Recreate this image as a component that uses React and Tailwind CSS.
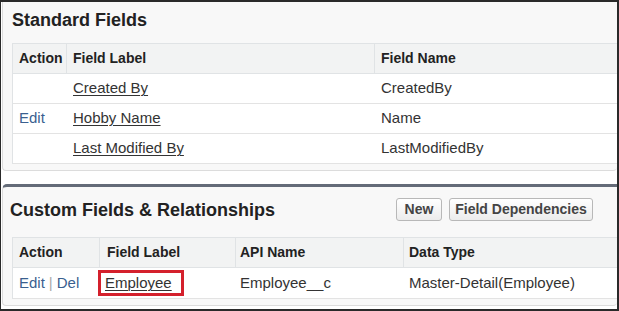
import React from "react";

const font = { fontFamily: '"Liberation Sans", Arial, sans-serif' };

function HCell({ children, className = "" }) {
  return (
    <div className={"flex items-center h-full text-[14px] font-bold text-[#222] " + className}>
      {children}
    </div>
  );
}

function Cell({ children, className = "" }) {
  return (
    <div className={"flex items-center h-full text-[15px] text-[#333] " + className}>
      {children}
    </div>
  );
}

function Link({ children }) {
  return <span className="underline underline-offset-[2px] decoration-[1px] text-[#333]">{children}</span>;
}

function ActionLink({ children }) {
  return <span className="text-[#3a5f8f]">{children}</span>;
}

function Button({ children, className = "" }) {
  return (
    <div
      className={
        "h-[23px] flex items-center justify-center rounded-[3px] border border-[#b8b8b8] bg-gradient-to-b from-white to-[#ececec] text-[14px] font-bold text-[#444] " +
        className
      }
    >
      {children}
    </div>
  );
}

export default function App() {
  const std = [
    { action: "", label: "Created By", name: "CreatedBy" },
    { action: "Edit", label: "Hobby Name", name: "Name" },
    { action: "", label: "Last Modified By", name: "LastModifiedBy" },
  ];
  return (
    <div
      style={font}
      className="w-[619px] h-[311px] bg-white border-t-2 border-l border-r-2 border-b-2 border-[#2a2a2a] overflow-hidden"
    >
      {/* Standard Fields panel */}
      <div className="ml-[1px] bg-[#f8f8f8] border-l border-b border-[#dcdcdc] rounded-b-[4px] pt-[7px] pb-[6px] pl-[9px]">
        <div className="text-[18px] font-bold leading-[22px] text-[#222] mb-[12px]">Standard Fields</div>
        <div className="bg-white border-l border-t border-[#e0e3e5]">
          <div className="grid grid-cols-[54px_308px_1fr] h-[30px] bg-[#f2f3f3] border-b border-[#e0e3e5]">
            <HCell className="pl-[6px] border-r border-[#e0e3e5]">Action</HCell>
            <HCell className="pl-[6px] border-r border-[#e0e3e5]">Field Label</HCell>
            <HCell className="pl-[6px]">Field Name</HCell>
          </div>
          {std.map((r) => (
            <div key={r.label} className="grid grid-cols-[54px_308px_1fr] h-[30px] border-b border-[#e3e3e3]">
              <Cell className="pl-[6px]">{r.action && <ActionLink>{r.action}</ActionLink>}</Cell>
              <Cell className="pl-[6px]">
                <Link>{r.label}</Link>
              </Cell>
              <Cell className="pl-[6px]">{r.name}</Cell>
            </div>
          ))}
        </div>
      </div>

      {/* Custom Fields panel */}
      <div className="mt-[13px] ml-[1px] bg-[#f8f8f8] border-t-[3px] border-t-[#646b78] border-l border-b border-l-[#dcdcdc] border-b-[#dcdcdc] rounded-tl-[5px] rounded-b-[4px] pt-[11px] pb-[6px] pl-[9px]">
        <div className="flex items-center justify-between h-[23px] pr-[24px]">
          <div className="text-[18px] font-bold leading-[22px] text-[#222] ml-[-2px]">
            Custom Fields &amp; Relationships
          </div>
          <div className="flex gap-[7px]">
            <Button className="w-[46px]">New</Button>
            <Button className="w-[144px]">Field Dependencies</Button>
          </div>
        </div>
        <div className="mt-[16px] bg-white border-l border-t border-[#e0e3e5]">
          <div className="grid grid-cols-[87px_136px_168px_1fr] h-[30px] bg-[#f2f3f3] border-b border-[#e0e3e5]">
            <HCell className="pl-[6px] border-r border-[#e0e3e5]">Action</HCell>
            <HCell className="pl-[7px] border-r border-[#e0e3e5]">Field Label</HCell>
            <HCell className="pl-[4px] border-r border-[#e0e3e5]">API Name</HCell>
            <HCell className="pl-[5px]">Data Type</HCell>
          </div>
          <div className="grid grid-cols-[87px_136px_168px_1fr] h-[31px] border-b border-[#e3e3e3]">
            <Cell className="pl-[6px]">
              <ActionLink>Edit</ActionLink>
              <span className="text-[#aaa] mx-[4px]">|</span>
              <ActionLink>Del</ActionLink>
            </Cell>
            <Cell>
              <span className="ml-[-2px] inline-block border-[3px] border-[#d4202c] pl-[4px] pr-[9px] leading-[20px]">
                <Link>Employee</Link>
              </span>
            </Cell>
            <Cell className="pl-[4px]">Employee__c</Cell>
            <Cell className="pl-[5px]">Master-Detail(Employee)</Cell>
          </div>
        </div>
      </div>
    </div>
  );
}
